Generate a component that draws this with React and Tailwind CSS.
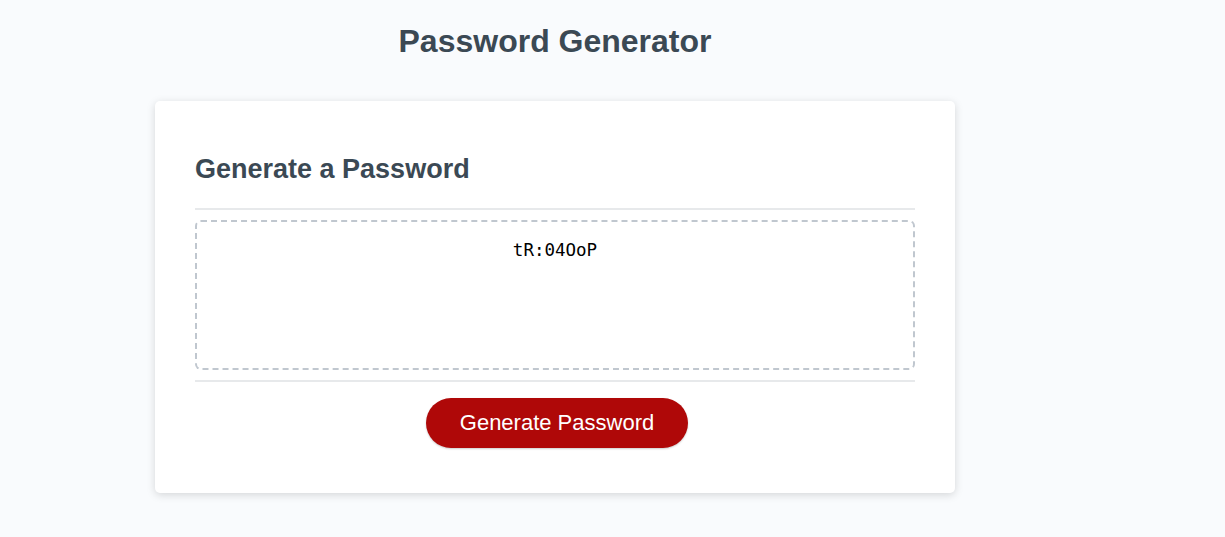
export default function App() {
  return (
    <div className="min-h-[537px] w-full bg-[#f9fbfd] font-['Liberation_Sans',Arial,sans-serif]">
      <div className="w-[1110px] pt-[23px]">
        <h1 className="text-center text-[32px] leading-[37px] font-bold text-[#3b4954]">
          Password Generator
        </h1>
        <div className="ml-[155px] mt-[41px] w-[800px] rounded-[5px] bg-white px-[40px] pt-[53px] pb-[45px] shadow-[0_2px_8px_rgba(0,0,0,0.15)]">
          <h2 className="text-[27px] leading-[31px] font-bold text-[#3b4954]">
            Generate a Password
          </h2>
          <div className="mt-[23px] h-[2px] w-full bg-[#e7e9eb]" />
          <div className="mt-[10px] h-[150px] w-full rounded-[6px] border-2 border-dashed border-[#c0c7cf] px-[15px] pt-[17px] text-center font-['DejaVu_Sans_Mono',Consolas,monospace] text-[17.5px] leading-[23px] text-black">
            tR:04OoP
          </div>
          <div className="mt-[10px] h-[2px] w-full bg-[#e7e9eb]" />
          <div className="mt-[16px] flex justify-center">
            <button className="ml-[4px] rounded-[25px] bg-[#af0808] px-[34px] py-[14px] text-[22px] leading-[22px] text-white shadow-[0_1px_2px_rgba(0,0,0,0.2)]">
              Generate Password
            </button>
          </div>
        </div>
      </div>
    </div>
  );
}
